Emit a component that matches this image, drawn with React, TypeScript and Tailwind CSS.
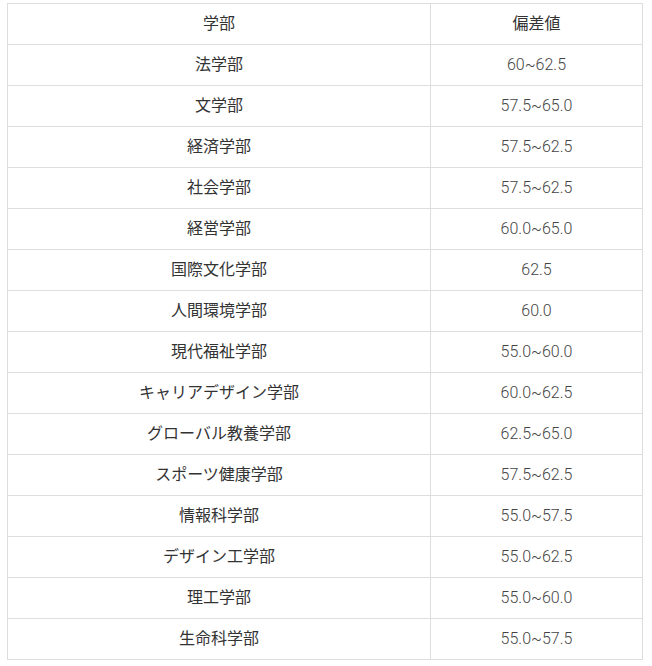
const rows: [string, string][] = [
  ["法学部", "60~62.5"],
  ["文学部", "57.5~65.0"],
  ["経済学部", "57.5~62.5"],
  ["社会学部", "57.5~62.5"],
  ["経営学部", "60.0~65.0"],
  ["国際文化学部", "62.5"],
  ["人間環境学部", "60.0"],
  ["現代福祉学部", "55.0~60.0"],
  ["キャリアデザイン学部", "60.0~62.5"],
  ["グローバル教養学部", "62.5~65.0"],
  ["スポーツ健康学部", "57.5~62.5"],
  ["情報科学部", "55.0~57.5"],
  ["デザイン工学部", "55.0~62.5"],
  ["理工学部", "55.0~60.0"],
  ["生命科学部", "55.0~57.5"],
];

export default function App() {
  return (
    <div className="bg-white min-h-[666px] pt-[3px] pl-[7px]">
      <table
        className="w-[636px] border-collapse text-[16px] text-[#333]"
        style={{ fontFamily: 'Roboto, "Noto Sans CJK JP", sans-serif' }}
      >
        <thead>
          <tr>
            <th className="w-[423px] h-[41px] border border-[#dddddd] font-normal text-center p-0">学部</th>
            <th className="h-[41px] border border-[#dddddd] font-normal text-center p-0">偏差値</th>
          </tr>
        </thead>
        <tbody>
          {rows.map(([name, score]) => (
            <tr key={name}>
              <td className="h-[41px] border border-[#dddddd] text-center p-0">{name}</td>
              <td className="h-[41px] border border-[#dddddd] text-center p-0 text-[#444] font-light">{score}</td>
            </tr>
          ))}
        </tbody>
      </table>
    </div>
  );
}
